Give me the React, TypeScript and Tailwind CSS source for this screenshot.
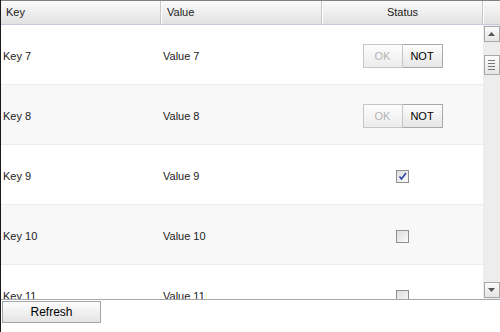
import React from "react";

type Row = { key: string; value: string; status: "buttons" | "checked" | "unchecked" };

const rows: Row[] = [
  { key: "Key 7", value: "Value 7", status: "buttons" },
  { key: "Key 8", value: "Value 8", status: "buttons" },
  { key: "Key 9", value: "Value 9", status: "checked" },
  { key: "Key 10", value: "Value 10", status: "unchecked" },
  { key: "Key 11", value: "Value 11", status: "unchecked" },
];

function Checkbox({ checked }: { checked: boolean }) {
  return (
    <div className="w-[13px] h-[13px] border border-[#8e8f8f] bg-gradient-to-br from-[#dcdcdc] to-[#fbfbfb] flex items-center justify-center">
      {checked && (
        <svg width="9" height="9" viewBox="0 0 9 9">
          <path d="M1.5 4.5 L3.5 7 L8 1" fill="none" stroke="#2b45a8" strokeWidth="1.6" />
        </svg>
      )}
    </div>
  );
}

function StatusButtons() {
  return (
    <div className="flex h-[24px]">
      <button className="w-[40px] h-full border border-[#c4c6c8] bg-gradient-to-b from-[#fdfdfd] to-[#ececec] text-[#b4b4b4]">
        OK
      </button>
      <button className="w-[40px] h-full border border-[#a6aab0] border-l-0 bg-gradient-to-b from-[#fdfdfd] to-[#e6e6e6] text-black">
        NOT
      </button>
    </div>
  );
}

function ScrollButton({ down }: { down?: boolean }) {
  return (
    <div className="w-[16px] h-[16px] border border-[#a8a8a8] bg-gradient-to-b from-[#fbfbfb] to-[#e4e4e4] flex items-center justify-center">
      <svg width="7" height="5" viewBox="0 0 7 5">
        {down ? <path d="M0 0 H7 L3.5 4 Z" fill="#555" /> : <path d="M0 4 H7 L3.5 0 Z" fill="#555" />}
      </svg>
    </div>
  );
}

export default function App() {
  return (
    <div className="w-[500px] h-[332px] bg-white border-l border-[#1a1a1a] font-['Liberation_Sans',Arial,sans-serif] text-[11px] text-[#222] overflow-hidden">
      <div className="h-[300px] flex flex-col border-t border-[#808080] border-b border-b-[#a4a8ac]">
        <div className="flex h-[24px] shrink-0 bg-gradient-to-b from-[#fafafa] to-[#e2e2e2] border-b border-[#c2cadb]">
          <div className="w-[160px] pl-[5px] flex items-center border-r border-[#c6c6c6]">Key</div>
          <div className="w-[161px] pl-[5px] flex items-center border-r border-[#c6c6c6] border-l border-l-white">Value</div>
          <div className="w-[161px] flex items-center justify-center border-r border-[#c6c6c6] border-l border-l-white">Status</div>
          <div className="flex-1 border-l border-white" />
        </div>
        <div className="flex flex-1 min-h-0">
          <div className="w-[482px] overflow-hidden">
            {rows.map((r, i) => (
              <div
                key={r.key}
                className={`flex items-center h-[60px] pt-[3px] shrink-0 border-b border-[#ececec] ${i % 2 === 1 ? "bg-[#f8f8f8]" : "bg-white"}`}
              >
                <div className="w-[160px] pl-[2px]">{r.key}</div>
                <div className="w-[161px] pl-[2px]">{r.value}</div>
                <div className="w-[161px] flex justify-center">
                  {r.status === "buttons" ? <StatusButtons /> : <Checkbox checked={r.status === "checked"} />}
                </div>
              </div>
            ))}
          </div>
          <div className="flex-1 bg-[#ededed] flex flex-col items-center pt-[1px] pb-[1px]">
            <ScrollButton />
            <div className="mt-[13px] w-[16px] h-[20px] border border-[#a8a8a8] bg-gradient-to-b from-[#fbfbfb] to-[#e6e6e6] flex flex-col items-center justify-center gap-[2px]">
              <div className="w-[7px] h-px bg-[#777]" />
              <div className="w-[7px] h-px bg-[#777]" />
              <div className="w-[7px] h-px bg-[#777]" />
              <div className="w-[7px] h-px bg-[#777]" />
            </div>
            <div className="flex-1" />
            <ScrollButton down />
          </div>
        </div>
      </div>
      <button className="ml-[1px] mt-[1px] w-[99px] h-[22px] border border-[#a2a6aa] bg-gradient-to-b from-[#fdfdfd] to-[#e4e4e4] text-[12px] text-black">
        Refresh
      </button>
    </div>
  );
}
